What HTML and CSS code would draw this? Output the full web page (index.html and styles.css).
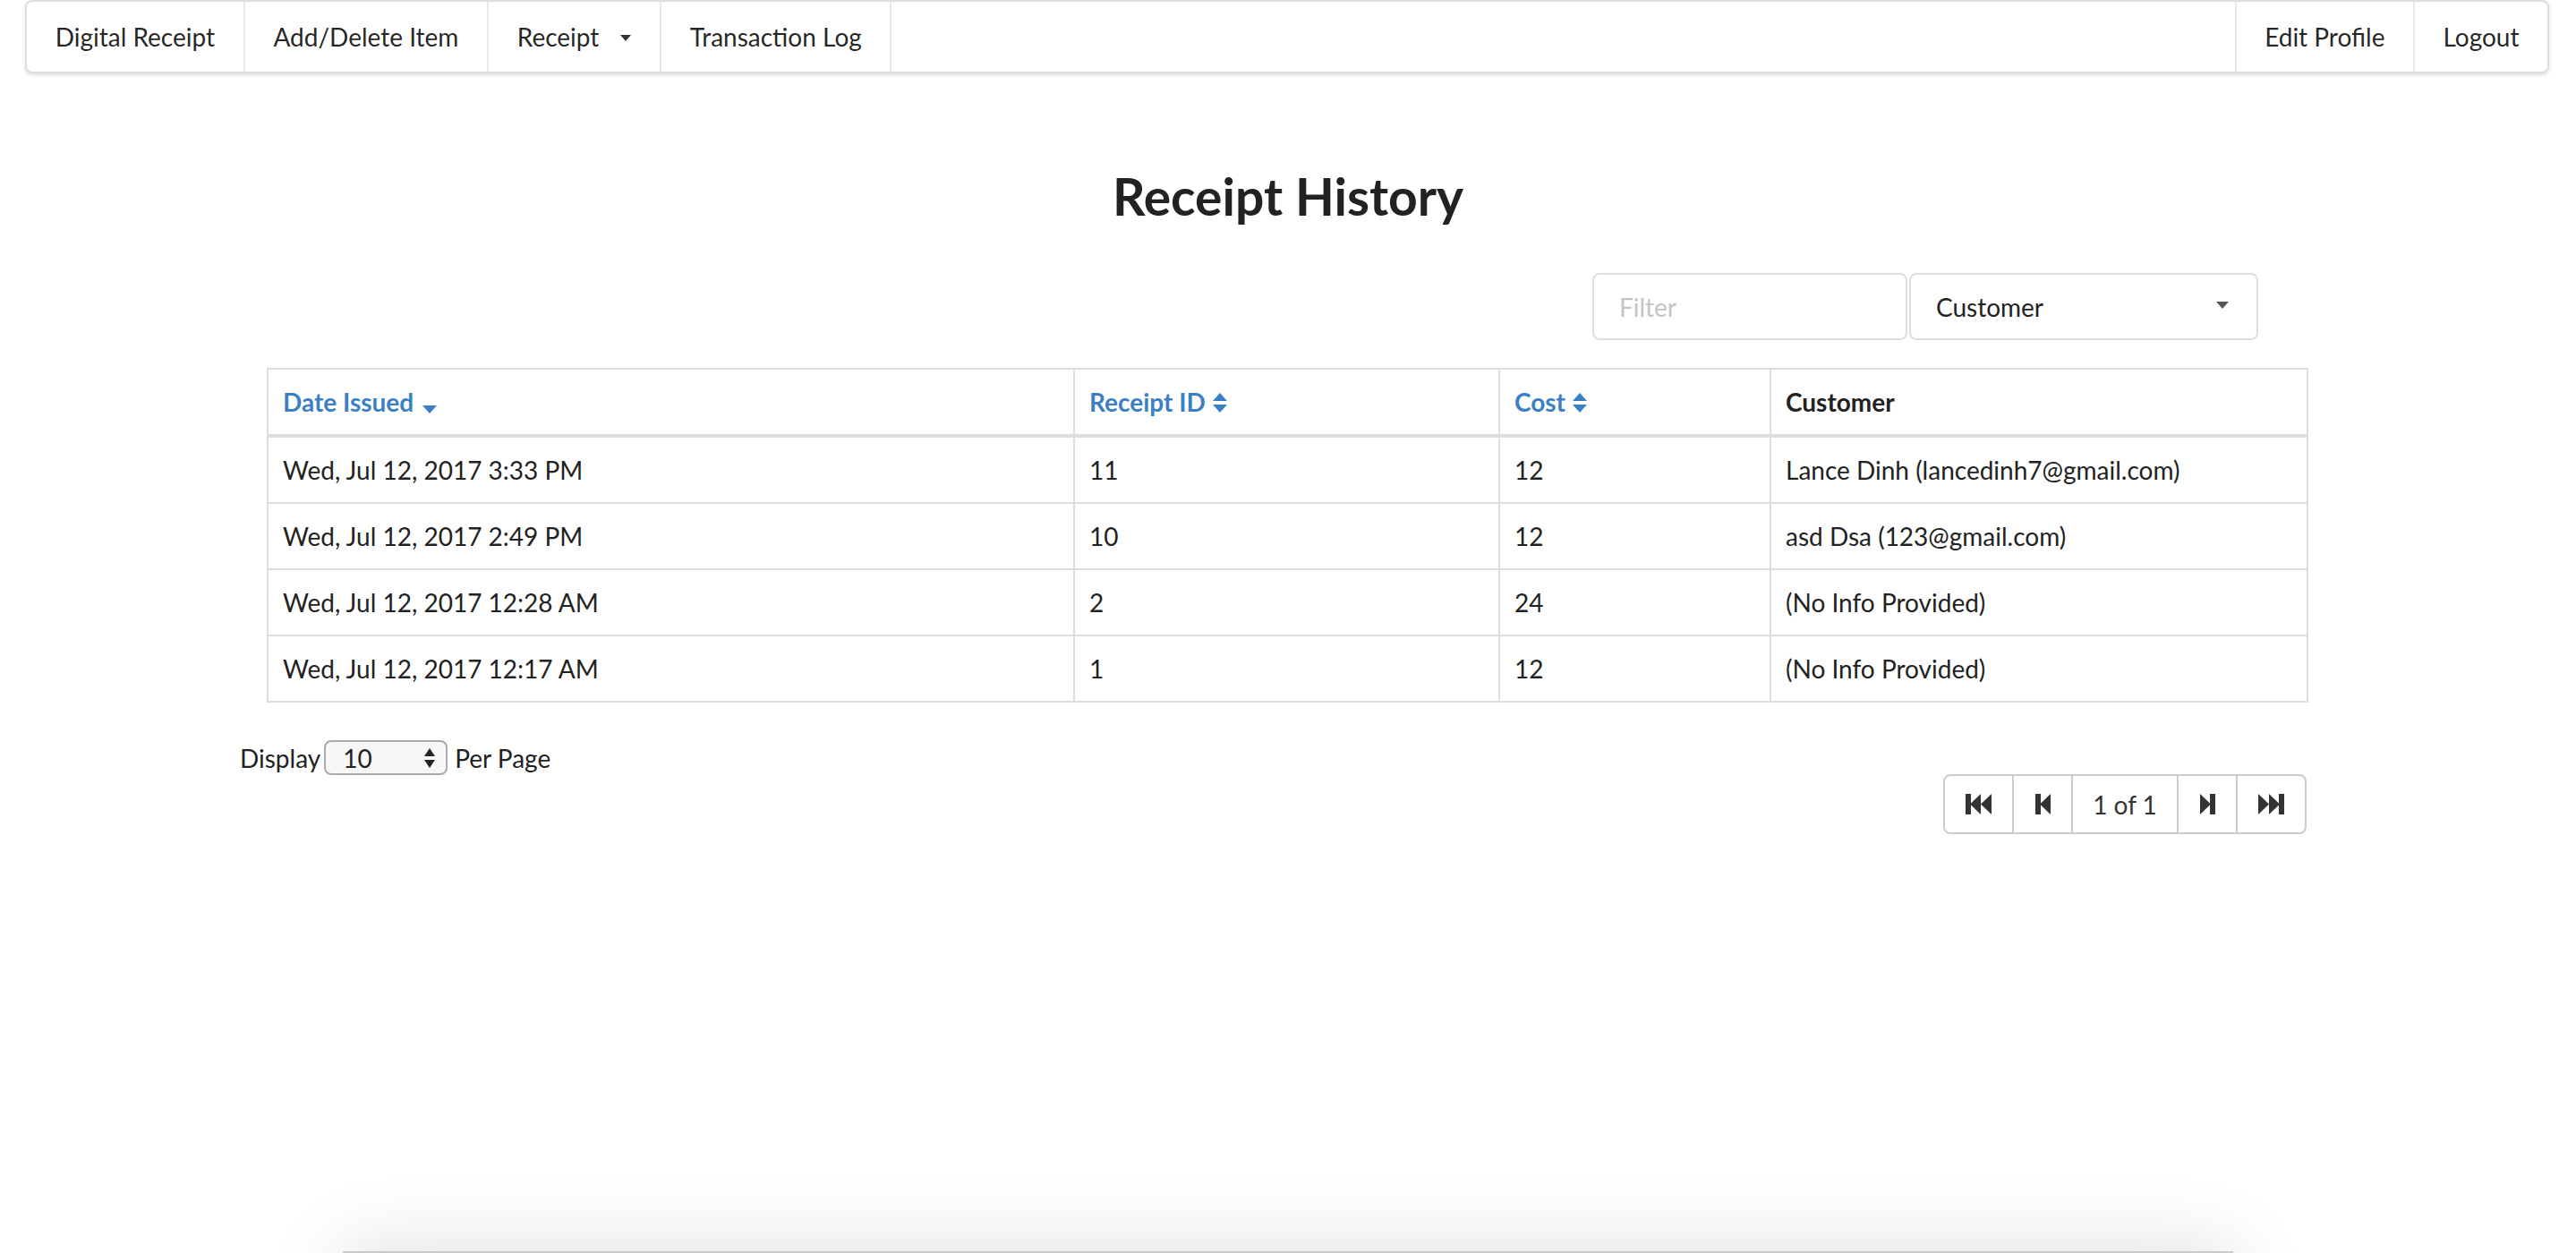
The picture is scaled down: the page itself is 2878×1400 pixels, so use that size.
FILE: index.html
```html
<!DOCTYPE html>
<html lang="en">
<head>
<meta charset="utf-8">
<title>Receipt History</title>
<link rel="stylesheet" href="styles.css">
</head>
<body>
<div class="page">
  <nav class="menu">
    <a class="item">Digital Receipt</a>
    <a class="item">Add/Delete Item</a>
    <a class="item">Receipt <span class="menu-caret"></span></a>
    <a class="item">Transaction Log</a>
    <div class="menu-right">
      <a class="item">Edit Profile</a>
      <a class="item">Logout</a>
    </div>
  </nav>

  <main class="container">
    <h2 class="title">Receipt History</h2>

    <div class="filters">
      <input class="filter-input" type="text" placeholder="Filter">
      <div class="filter-select">Customer <span class="select-caret"></span></div>
    </div>

    <table class="grid">
      <colgroup>
        <col class="col-date">
        <col class="col-id">
        <col class="col-cost">
        <col class="col-customer">
      </colgroup>
      <thead>
        <tr>
          <th><span class="sort-link">Date Issued</span><svg class="sort-down" viewBox="0 0 16 9"><polygon points="0,0 16,0 8,9" /></svg></th>
          <th><span class="sort-link">Receipt ID</span><svg class="sort-both" viewBox="0 0 16 22"><polygon points="8,0 16,9 0,9" /><polygon points="0,13 16,13 8,22" /></svg></th>
          <th><span class="sort-link">Cost</span><svg class="sort-both" viewBox="0 0 16 22"><polygon points="8,0 16,9 0,9" /><polygon points="0,13 16,13 8,22" /></svg></th>
          <th class="plain-head">Customer</th>
        </tr>
      </thead>
      <tbody>
        <tr><td>Wed, Jul 12, 2017 3:33 PM</td><td>11</td><td>12</td><td>Lance Dinh (lancedinh7@gmail.com)</td></tr>
        <tr><td>Wed, Jul 12, 2017 2:49 PM</td><td>10</td><td>12</td><td>asd Dsa (123@gmail.com)</td></tr>
        <tr><td>Wed, Jul 12, 2017 12:28 AM</td><td>2</td><td>24</td><td>(No Info Provided)</td></tr>
        <tr><td>Wed, Jul 12, 2017 12:17 AM</td><td>1</td><td>12</td><td>(No Info Provided)</td></tr>
      </tbody>
    </table>

    <div class="display-row">
      <span>Display</span>
      <span class="native-select">10
        <svg class="updown" viewBox="0 0 12 22"><polygon points="6,0 12,9 0,9" /><polygon points="0,13 12,13 6,22" /></svg>
      </span>
      <span>Per Page</span>
    </div>

    <div class="pager-row">
      <div class="pager">
        <button class="pbtn wide"><svg viewBox="0 0 29 23" class="pico-wide"><rect x="0" y="0" width="6" height="23"/><polygon points="5,11.5 17,0 17,23"/><polygon points="17,11.5 29,0 29,23"/></svg></button>
        <button class="pbtn"><svg viewBox="0 0 17 23" class="pico"><rect x="0" y="0" width="6" height="23"/><polygon points="5,11.5 17,0 17,23"/></svg></button>
        <button class="pbtn label">1 of 1</button>
        <button class="pbtn"><svg viewBox="0 0 17 23" class="pico"><polygon points="0,0 12,11.5 0,23"/><rect x="11" y="0" width="6" height="23"/></svg></button>
        <button class="pbtn wide"><svg viewBox="0 0 29 23" class="pico-wide"><polygon points="0,0 12,11.5 0,23"/><polygon points="12,0 24,11.5 12,23"/><rect x="23" y="0" width="6" height="23"/></svg></button>
      </div>
    </div>
  </main>
</div>
<footer class="footer"></footer>
</body>
</html>
```

FILE: styles.css
```css
html, body {
  margin: 0;
  padding: 0;
  background: #fff;
}

body {
  font-family: Lato, "Open Sans", "Liberation Sans", Arial, sans-serif;
  color: #212121;
  overflow: hidden;
}

.page {
  min-height: 1398px;
}

/* ---------- top menu ---------- */
.menu {
  display: flex;
  height: 82px;
  box-sizing: border-box;
  margin: 0 30px 0 28px;
  border: 2px solid rgba(34, 36, 38, 0.15);
  border-radius: 8px;
  box-shadow: 0 2px 4px rgba(34, 36, 38, 0.15);
  background: #fff;
}

.item {
  display: flex;
  align-items: center;
  padding: 0 31.7px;
  font-size: 28px;
  color: rgba(0, 0, 0, 0.87);
  border-right: 2px solid rgba(34, 36, 38, 0.1);
  cursor: pointer;
}

.menu-caret {
  display: inline-block;
  width: 0;
  height: 0;
  margin-left: 24px;
  margin-top: 2px;
  border-left: 6px solid transparent;
  border-right: 6px solid transparent;
  border-top: 7px solid rgba(0, 0, 0, 0.8);
}

.menu-right {
  display: flex;
  margin-left: auto;
}

.menu-right .item {
  padding: 0 31.5px;
  border-right: none;
  border-left: 2px solid rgba(34, 36, 38, 0.1);
}

/* ---------- content ---------- */
.container {
  width: 2342px;
  margin: 0 auto;
}

.title {
  margin: 103px 0 0;
  font-size: 57px;
  line-height: 68px;
  font-weight: 700;
  text-align: center;
  color: #222;
}

.filters {
  display: flex;
  justify-content: flex-end;
  margin-top: 52px;
  padding-right: 87px;
}

.filter-input {
  box-sizing: border-box;
  width: 352px;
  height: 75px;
  margin: 0;
  padding: 0 28px;
  border: 2px solid #dedede;
  border-radius: 8px;
  font-family: inherit;
  font-size: 28px;
  color: #222;
  outline: none;
}

.filter-input::placeholder {
  color: #c4c4c4;
}

.filter-select {
  box-sizing: border-box;
  display: flex;
  align-items: center;
  width: 390px;
  height: 75px;
  margin-left: 2px;
  padding: 0 28px;
  border: 2px solid #dedede;
  border-radius: 8px;
  font-size: 28px;
  color: #222;
}

.select-caret {
  width: 0;
  height: 0;
  margin-left: auto;
  margin-right: 3px;
  margin-top: -4px;
  border-left: 7px solid transparent;
  border-right: 7px solid transparent;
  border-top: 8px solid #555;
}

/* ---------- table ---------- */
.grid {
  width: 2279px;
  margin: 31px 30px 0;
  border-collapse: collapse;
  table-layout: fixed;
  font-size: 28px;
  line-height: 40px;
}

.col-date { width: 901px; }
.col-id { width: 475px; }
.col-cost { width: 303px; }
.col-customer { width: 600px; }

.grid th,
.grid td {
  padding: 16px;
  border: 2px solid #ddd;
  text-align: left;
  vertical-align: middle;
  white-space: nowrap;
}

.grid th {
  border-bottom-width: 4px;
  font-weight: 700;
}

.grid td {
  color: #222;
}

.sort-link {
  color: #3b7fc4;
}

.plain-head {
  color: #222;
}

.sort-down {
  width: 16px;
  height: 9px;
  margin-left: 10px;
  fill: #3b7fc4;
  vertical-align: -2px;
}

.sort-both {
  width: 16px;
  height: 22px;
  margin-left: 8px;
  fill: #3b7fc4;
  vertical-align: -1px;
}

/* ---------- display row ---------- */
.display-row {
  display: flex;
  align-items: center;
  height: 39px;
  margin-top: 42px;
  font-size: 28px;
  color: #222;
}

.native-select {
  box-sizing: border-box;
  display: flex;
  align-items: center;
  width: 138px;
  height: 39px;
  margin: 0 8px 0 4px;
  padding: 0 12px 0 19px;
  border: 2px solid #aaa;
  border-radius: 8px;
  background: #f7f7f7;
  font-size: 28px;
}

.updown {
  width: 12px;
  height: 22px;
  margin-left: auto;
  fill: #222;
}

/* ---------- pager ---------- */
.pager-row {
  display: flex;
  justify-content: flex-end;
  margin-top: -1px;
  padding-right: 33px;
}

.pager {
  display: flex;
}

.pbtn {
  box-sizing: border-box;
  display: flex;
  align-items: center;
  justify-content: center;
  width: 68px;
  height: 67px;
  margin: 0 0 0 -2px;
  padding: 0;
  border: 2px solid #ccc;
  background: #fff;
  font-family: inherit;
  font-size: 28px;
  color: #333;
}

.pbtn:first-child {
  margin-left: 0;
  border-radius: 8px 0 0 8px;
}

.pbtn:last-child {
  border-radius: 0 8px 8px 0;
}

.pbtn.wide {
  width: 79px;
}

.pbtn.label {
  width: 120px;
}

.pico {
  width: 17px;
  height: 23px;
  fill: #333;
}

.pico-wide {
  width: 29px;
  height: 23px;
  fill: #333;
}

/* ---------- footer ---------- */
.footer {
  width: 2112px;
  height: 120px;
  margin: 0 auto;
  border-top: 2px solid #c9c9c9;
  background: #f2f2f2;
  box-shadow: 0 0 90px rgba(0, 0, 0, 0.14);
}
```
